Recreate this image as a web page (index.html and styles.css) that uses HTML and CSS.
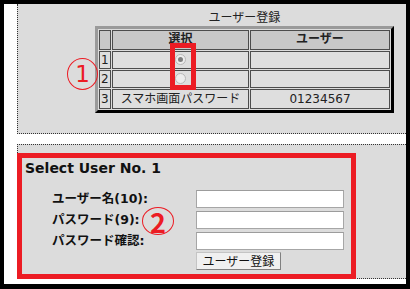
FILE: index.html
```html
<!DOCTYPE html>
<html lang="ja">
<head>
    <meta charset="UTF-8">
    <link rel="stylesheet" href="styles.css">
    <title>ユーザー登録</title>
</head>
<body>
<div class="shot">
    <div class="panel panel-list">
        <table class="users">
            <caption>ユーザー登録</caption>
            <tr class="head">
                <th class="no"></th>
                <th class="sel">選択</th>
                <th class="user">ユーザー</th>
            </tr>
            <tr class="row">
                <td class="no">1</td>
                <td class="sel"><span class="radio on"></span></td>
                <td></td>
            </tr>
            <tr class="row">
                <td class="no">2</td>
                <td class="sel"><span class="radio"></span></td>
                <td></td>
            </tr>
            <tr class="row last">
                <td class="no">3</td>
                <td class="sel">スマホ画面パスワード</td>
                <td>01234567</td>
            </tr>
        </table>
    </div>

    <div class="panel panel-form">
        <h3 class="title">Select User No. 1</h3>
        <form class="reg">
            <label>ユーザー名(10):</label>
            <input type="text" class="field">
            <label>パスワード(9):</label>
            <input type="password" class="field">
            <label>パスワード確認:</label>
            <input type="password" class="field">
            <span></span>
            <button type="button" class="btn">ユーザー登録</button>
        </form>
    </div>

    <!-- annotations -->
    <div class="mark box-radio"></div>
    <div class="mark box-form"></div>
    <span class="num num-1">1</span>
    <span class="num num-2">2</span>
</div>
</body>
</html>
```

FILE: styles.css
```css
body {
    margin: 0;
    padding: 0;
    background: #000;
    font-family: "DejaVu Sans", "Noto Sans CJK JP", sans-serif;
}

.shot {
    position: relative;
    width: 402px;
    height: 280px;
    margin: 4px 0 0 4px;
    background: #fff;
    overflow: hidden;
}

.panel {
    margin-left: 13px;
    background: #dcdcdc;
    border-left: 1px dotted #333;
}

.panel-list {
    height: 130px;
    border-bottom: 1px dotted #333;
    box-sizing: border-box;
    padding-left: 77px;
}

.panel-form {
    margin-top: 10px;
    height: 135px;
    box-sizing: border-box;
    border-top: 1px dotted #333;
    border-bottom: 1px dotted #333;
    padding: 15px 0 0 7px;
}

/* user table */

.users {
    width: 299px;
    table-layout: fixed;
    border-collapse: separate;
    border-spacing: 1px;
    border: 3px outset #8a8a8a;
    border-color: #9a9a9a #333 #333 #9a9a9a;
    font-size: 12px;
    color: #222;
}

.users caption {
    font-family: "Noto Sans CJK JP", sans-serif;
    font-size: 12px;
    line-height: 14px;
    padding: 6px 0 2px;
    color: #222;
}

.users th,
.users td {
    box-sizing: border-box;
    border: 1px solid #4c4c4c;
    padding: 0 1px;
    text-align: center;
    vertical-align: middle;
    height: 18px;
    line-height: 14px;
}

.users th {
    background: #c8c8c8;
    font-family: "Noto Sans CJK JP", sans-serif;
    font-weight: bold;
    height: 20px;
    vertical-align: top;
    padding-top: 0;
}

.users td {
    background: #dedede;
}

.users .last td {
    height: 20px;
}

.users th.no,
.users td.no {
    width: 12px;
    text-align: left;
}

.users .sel {
    width: 137px;
}

.radio {
    display: inline-block;
    width: 11px;
    height: 11px;
    box-sizing: border-box;
    border: 1px solid #b8b8b8;
    border-radius: 50%;
    background: #ececec;
    vertical-align: middle;
    position: relative;
    top: -1px;
}

.radio.on::after {
    content: "";
    position: absolute;
    left: 2px;
    top: 2px;
    width: 5px;
    height: 5px;
    border-radius: 50%;
    background: #808080;
}

/* register form */

.title {
    margin: 0;
    font-size: 14px;
    line-height: 17px;
    font-weight: bold;
    color: #111;
}

.reg {
    display: grid;
    grid-template-columns: 144px 148px;
    row-gap: 3px;
    margin: 13px 0 0 27px;
    align-items: center;
}

.reg label {
    font-size: 12.5px;
    font-weight: bold;
    color: #111;
    line-height: 18px;
}

.field {
    box-sizing: border-box;
    width: 148px;
    height: 18px;
    margin: 0;
    border: 1px solid #a6a6a6;
    border-top-color: #9c9c9c;
    background: #fff;
}

.btn {
    box-sizing: border-box;
    width: 85px;
    height: 18px;
    margin-top: -1px;
    padding: 0;
    font-family: "Noto Sans CJK JP", sans-serif;
    font-size: 12px;
    line-height: 14px;
    color: #111;
    background: #f0f0f0;
    border: 1px solid #a0a0a0;
    border-color: #c4c4c4 #808080 #808080 #c4c4c4;
}

/* red annotations */

.mark {
    position: absolute;
    border: 5px solid #ec1c24;
}

.box-radio {
    left: 166px;
    top: 39px;
    width: 16px;
    height: 37px;
}

.box-form {
    left: 13px;
    top: 149px;
    width: 329px;
    height: 116px;
}

.num {
    position: absolute;
    box-sizing: border-box;
    border: 1px solid #ec1c24;
    border-radius: 50%;
    color: #ec1c24;
    text-align: center;
}

.num-1 {
    left: 63px;
    top: 54px;
    width: 31px;
    height: 32px;
    font-size: 23px;
    line-height: 30px;
}

.num-2 {
    left: 138px;
    top: 203px;
    width: 32px;
    height: 28px;
    font-size: 27px;
    line-height: 27px;
    font-family: "Noto Sans CJK JP", sans-serif;
    font-weight: bold;
}
```
